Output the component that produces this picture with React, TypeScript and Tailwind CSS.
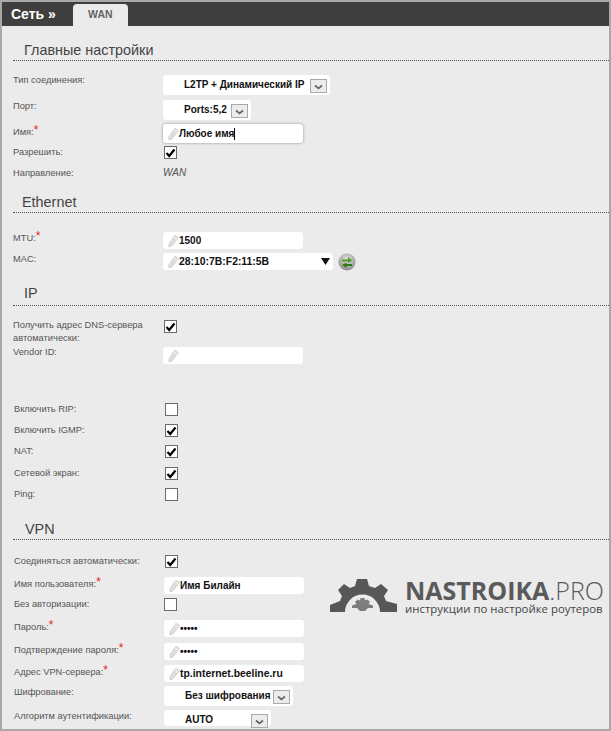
import type { ReactNode } from "react";

function Pencil() {
  return (
    <svg width="11" height="14" viewBox="0 0 11 14" className="shrink-0">
      <path d="M7 1 L10.5 3.5 L4 12 L0.8 13 L1 9.5 Z" fill="#dedede" stroke="#c6c6c6" strokeWidth="0.6" />
      <path d="M6 3 L8.8 5" stroke="#f7f7f7" strokeWidth="1" />
    </svg>
  );
}

function Check({ on = true }: { on?: boolean }) {
  return (
    <span className="flex h-[13px] w-[13px] items-center justify-center border border-[#6b6b6b] bg-white">
      {on && (
        <svg width="11" height="10" viewBox="0 0 11 10">
          <path d="M1.5 5 L4.2 8 L9.5 1.5" fill="none" stroke="#000" strokeWidth="2.2" />
        </svg>
      )}
    </span>
  );
}

function Input({
  value,
  caret,
  focus,
  mac,
  text = "text-[10px]",
}: {
  value?: string;
  caret?: boolean;
  focus?: boolean;
  mac?: boolean;
  text?: string;
}) {
  return (
    <div
      className={`flex items-center rounded-[3px] bg-white pl-[5px] ${focus ? "h-[19px] shadow-[0_0_3px_#8f8f8f]" : "h-[17px]"} ${mac ? "w-[170px]" : "w-[140px]"}`}
    >
      <Pencil />
      <span className={`font-bold whitespace-nowrap text-[#111] ${text}`}>{value}</span>
      {caret && <span className="h-[12px] w-px bg-black" />}
      {mac && (
        <svg width="9" height="7" viewBox="0 0 9 7" className="mr-[3px] ml-auto">
          <path d="M0 0 H9 L4.5 7 Z" fill="#111" />
        </svg>
      )}
    </div>
  );
}

function Select({ value, width, short }: { value: string; width: string; short?: boolean }) {
  return (
    <div className={`flex items-start rounded-[3px] bg-white pl-[21px] ${width} ${short ? "h-[16px]" : "h-[20px]"}`}>
      <span className="mt-[4px] text-[10px] leading-[12px] font-bold whitespace-nowrap text-[#111]">{value}</span>
      <span className="mt-[4px] mr-[3px] ml-auto flex h-[14px] w-[17px] items-center justify-center border border-[#a9a9a9] bg-[#ececec]">
        <svg width="9" height="6" viewBox="0 0 9 6" className="mt-[2px]">
          <path d="M1 1.5 L4.5 4.5 L8 1.5" fill="none" stroke="#666" strokeWidth="1.7" />
        </svg>
      </span>
    </div>
  );
}

function Row({
  label,
  req,
  h,
  labelClass = "",
  boxClass = "",
  children,
}: {
  label: ReactNode;
  req?: boolean;
  h: string;
  labelClass?: string;
  boxClass?: string;
  children?: ReactNode;
}) {
  return (
    <div className={`flex ${h}`}>
      <div className={`w-[150px] shrink-0 text-[9.3px] leading-[12px] whitespace-nowrap text-[#555] ${labelClass}`}>
        {label}
        {req && <span className="relative top-[-1px] text-[12px] leading-[10px] text-[#e0242c]">*</span>}
      </div>
      <div className={`flex items-start ${boxClass}`}>{children}</div>
    </div>
  );
}

function Section({ title, h, pl, pb = "pb-[1px]" }: { title: string; h: string; pl: string; pb?: string }) {
  return (
    <div className={`flex items-end border-b border-dotted border-[#555] ${h} ${pl}`}>
      <span className={`text-[14.4px] leading-[18px] text-[#444] ${pb}`}>{title}</span>
    </div>
  );
}

function RefreshButton() {
  return (
    <svg width="18" height="18" viewBox="0 0 18 18" className="ml-[5px]">
      <defs>
        <radialGradient id="ring" cx="50%" cy="35%" r="65%">
          <stop offset="0%" stopColor="#e4e4e4" />
          <stop offset="100%" stopColor="#8c8c8c" />
        </radialGradient>
      </defs>
      <circle cx="9" cy="9" r="8.5" fill="url(#ring)" />
      <path d="M4 6.5 H10 V4 L14 7.5 L10 10 V8.5 H4 Z" fill="#4f9a1e" />
      <path d="M14 11 H8.5 V9.5 L4 12 L8.5 15 V13 H14 Z" fill="#2f7a12" />
    </svg>
  );
}

function Logo() {
  return (
    <div className="absolute top-[578px] left-[330px] flex items-start">
      <svg width="67" height="35" viewBox="0 0 67 35" className="shrink-0">
        <path
          fill="#575757"
          d="M27 1 H37 L39 8 L45 10 L51 6 L58 12 L54 18 L56 23 L67 26 V34 H50 A17.5 17.5 0 0 0 15 34 H0 V27 L10 23 L12 18 L8 12 L14 6 L20 10 L25 8 Z"
        />
        <path
          fill="#7d7d7d"
          d="M30.5 20 H34.5 L35 22.5 L37.5 21.5 L40 24 L38.5 26 L43 27.5 V30 H38 L35 33 H30 L27 30 H22 V27.5 L26.5 26 L25 24 L27.5 21.5 L30 22.5 Z"
        />
      </svg>
      <div className="ml-[8px] flex flex-col font-['Open_Sans',sans-serif]">
        <div className="mt-[1px] h-[22px] text-[25px] whitespace-nowrap text-[#5a5a5a]">
          <span className="inline-block align-top leading-[22px] font-bold">NASTROIKA</span>
          <span className="inline-block align-top leading-[22px] font-light">.PRO</span>
        </div>
        <div className="text-[11.4px] leading-[15px] whitespace-nowrap text-[#444]">
          инструкции по настройке роутеров
        </div>
      </div>
    </div>
  );
}

export default function App() {
  return (
    <div className="relative h-[731px] w-[611px] overflow-hidden bg-[#a9a9a9] p-[2px] font-['Liberation_Sans',Arial,sans-serif]">
      <div className="h-[727px] overflow-hidden bg-[#ebebeb]">
        <div className="flex h-[24px] items-end bg-[#3f3f3f] pl-[9px]">
          <span className="self-center text-[14px] font-bold text-white">Сеть »</span>
          <span className="ml-[17px] flex h-[22px] w-[55px] items-center justify-center rounded-t-[4px] bg-[#ebebeb] text-[10.5px] font-bold text-[#666]">
            WAN
          </span>
        </div>

        <div className="pl-[11px]">
          <Section title="Главные настройки" h="h-[35px]" pl="pl-[11px]" />
          <div className="h-[14px]" />
          <Row h="h-[25px]" label="Тип соединения:" labelClass="mt-[-1px]">
            <Select value="L2TP + Динамический IP" width="w-[167px]" />
          </Row>
          <Row h="h-[24px]" label="Порт:">
            <Select value="Ports:5,2" width="w-[88px]" />
          </Row>
          <Row h="h-[22px]" label="Имя:" req labelClass="mt-[2px]">
            <Input value="Любое имя" caret focus />
          </Row>
          <Row h="h-[21px]" label="Разрешить:" boxClass="pl-[1px]">
            <Check />
          </Row>
          <Row h="h-[22px]" label="Направление:">
            <span className="text-[10px] leading-[12px] text-[#555] italic">WAN</span>
          </Row>

          <Section title="Ethernet" h="h-[24px]" pl="pl-[9px]" />
          <div className="h-[19px]" />
          <Row h="h-[21px]" label="MTU:" req>
            <Input value="1500" />
          </Row>
          <Row h="h-[27px]" label="MAC:">
            <Input value="28:10:7B:F2:11:5B" mac text="text-[10.4px]" />
            <RefreshButton />
          </Row>

          <Section title="IP" h="h-[26px]" pl="pl-[11px]" pb="pb-[3px]" />
          <div className="h-[14px]" />
          <Row
            h="h-[27px]"
            labelClass="mt-[-1px] leading-[13px]"
            boxClass="pl-[1px]"
            label={
              <>
                Получить адрес DNS-сервера
                <br />
                автоматически:
              </>
            }
          >
            <Check />
          </Row>
          <Row h="h-[56px]" label="Vendor ID:" labelClass="mt-[-1px]">
            <Input />
          </Row>

          <Row h="h-[21px]" label="Включить RIP:" labelClass="pl-[1px]" boxClass="pl-[2px]">
            <Check on={false} />
          </Row>
          <Row h="h-[21px]" label="Включить IGMP:" labelClass="pl-[1px]" boxClass="pl-[2px]">
            <Check />
          </Row>
          <Row h="h-[22px]" label="NAT:" labelClass="pl-[1px]" boxClass="pl-[2px]">
            <Check />
          </Row>
          <Row h="h-[21px]" label="Сетевой экран:" labelClass="pl-[1px]" boxClass="pl-[2px]">
            <Check />
          </Row>
          <Row h="h-[22px]" label="Ping:" labelClass="pl-[1px]" boxClass="pl-[2px]">
            <Check on={false} />
          </Row>

          <Section title="VPN" h="h-[30px]" pl="pl-[12px]" />
          <div className="h-[15px]" />
          <Row h="h-[22px]" label="Соединяться автоматически:" labelClass="pl-[1px]" boxClass="pl-[2px]">
            <Check />
          </Row>
          <Row h="h-[21px]" label="Имя пользователя:" req labelClass="mt-[1px] pl-[1px]" boxClass="pl-[1px]">
            <Input value="Имя Билайн" />
          </Row>
          <Row h="h-[22px]" label="Без авторизации:" labelClass="pl-[1px]" boxClass="pl-[1px]">
            <Check on={false} />
          </Row>
          <Row h="h-[23px]" label="Пароль:" req labelClass="mt-[1px] pl-[1px]" boxClass="pl-[1px]">
            <Input value="•••••" />
          </Row>
          <Row h="h-[22px]" label="Подтверждение пароля:" req labelClass="mt-[1px] pl-[1px]" boxClass="pl-[1px]">
            <Input value="•••••" />
          </Row>
          <Row h="h-[21px]" label="Адрес VPN-сервера:" req labelClass="mt-[1px] pl-[1px]" boxClass="pl-[1px]">
            <Input value="tp.internet.beeline.ru" text="text-[10.4px]" />
          </Row>
          <Row h="h-[24px]" label="Шифрование:" labelClass="pl-[1px]" boxClass="pl-[1px]">
            <Select value="Без шифрования" width="w-[129px]" />
          </Row>
          <Row h="h-[17px]" label="Алгоритм аутентификации:" labelClass="pl-[1px]" boxClass="pl-[1px]">
            <Select value="AUTO" width="w-[107px]" short />
          </Row>
        </div>
      </div>
      <Logo />
    </div>
  );
}
